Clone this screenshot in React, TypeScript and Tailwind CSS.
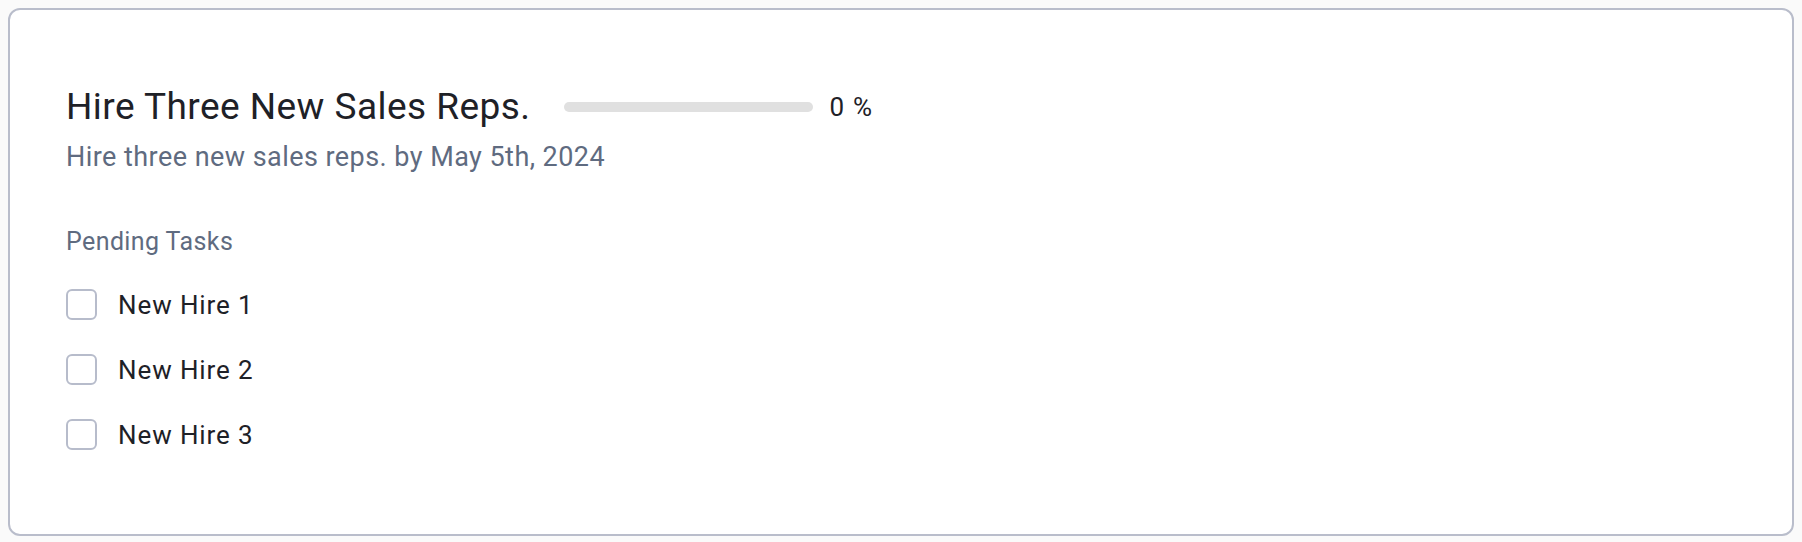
import React from "react";

const tasks = ["New Hire 1", "New Hire 2", "New Hire 3"];

export default function App() {
  return (
    <div
      className="min-h-screen w-full bg-[#fafafa] pt-2 pl-2 pr-[8px] pb-[6px]"
      style={{ fontFamily: "Roboto, 'Noto Sans', Arial, sans-serif" }}
    >
      <div className="h-[528px] rounded-[12px] border-2 border-[#b9bdcb] bg-white pl-[56px] pt-[75px]">
        <div className="flex items-center">
          <h1 className="text-[37px] leading-[44px] tracking-[0.45px] font-normal text-[#1e2127]">
            Hire Three New Sales Reps.
          </h1>
          <div className="ml-[34px] h-[10px] w-[249px] rounded-full bg-[#e0e0e0]" />
          <span className="ml-[16px] text-[26px] leading-[30px] tracking-[1.2px] text-[#1e2127]">
            0 %
          </span>
        </div>
        <p className="mt-[12px] text-[27px] leading-[32px] tracking-[0.45px] text-[#5f6b80]">
          Hire three new sales reps. by May 5th, 2024
        </p>
        <p className="mt-[54px] text-[25px] leading-[29px] tracking-[0.4px] text-[#5f6b80]">
          Pending Tasks
        </p>
        <ul className="mt-[33px] flex flex-col gap-[34px]">
          {tasks.map((t) => (
            <li key={t} className="flex h-[31px] items-center">
              <span className="box-border h-[31px] w-[31px] rounded-[6px] border-2 border-[#b7bccb] bg-white" />
              <span className="ml-[21px] text-[26px] leading-[30px] tracking-[0.9px] text-[#1e2127]">
                {t}
              </span>
            </li>
          ))}
        </ul>
      </div>
    </div>
  );
}
